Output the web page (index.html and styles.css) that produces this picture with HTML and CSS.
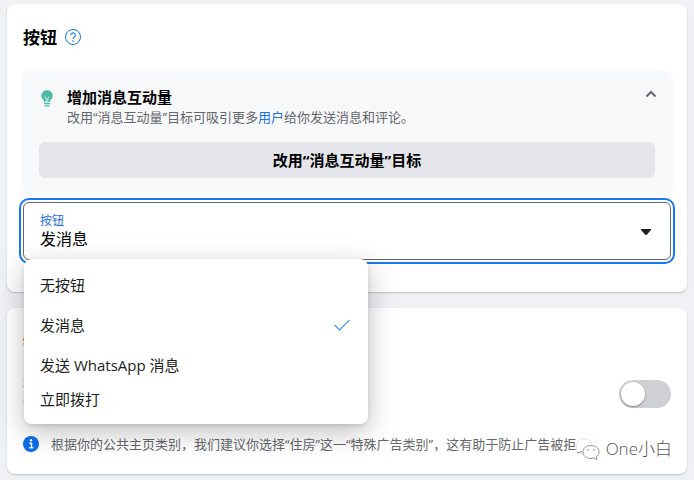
FILE: index.html
```html
<!DOCTYPE html>
<html lang="zh-CN">

<head>
    <meta charset="UTF-8">
    <meta name="viewport" content="width=device-width, initial-scale=1.0">
    <title>按钮</title>
    <link rel="stylesheet" href="styles.css">
</head>

<body>

    <section class="card">
        <h2 class="card-title">
            按钮
            <svg class="help-icon" viewBox="0 0 16 16" width="16" height="16">
                <circle cx="8" cy="8" r="7.5" fill="none" stroke="#1b74d8" />
                <path d="M5.7 6.2a2.3 2.3 0 1 1 3.5 2c-.8.5-1.2.8-1.2 1.7" fill="none" stroke="#1b74d8" stroke-width="1.1" />
                <circle cx="8" cy="12" r=".8" fill="#1b74d8" />
            </svg>
        </h2>

        <div class="tip">
            <div class="tip-head">
                <svg class="bulb" viewBox="0 0 12 17" width="12" height="17">
                    <path d="M6 0a5.7 5.7 0 0 0-5.7 5.7c0 2.3 1.5 3.3 2.3 4.6.4.7.5 1.2.6 1.9h5.6c.1-.7.2-1.2.6-1.9.8-1.3 2.3-2.3 2.3-4.6A5.7 5.7 0 0 0 6 0z" fill="#4dbba6" />
                    <path d="M4 6.5l1.2 2v3.7M8 6.5l-1.200 2v3.700" fill="none" stroke="#f7f8fa" stroke-width=".8" />
                    <path d="M3 13.7h6M3.5 15.9h5" stroke="#4dbba6" stroke-width="1.2" />
                </svg>
                <div class="tip-text">
                    <h3>增加消息互动量</h3>
                    <p>改用“消息互动量”目标可吸引更多<a href="#">用户</a>给你发送消息和评论。</p>
                </div>
                <button class="collapse" type="button" aria-label="收起">
                    <svg viewBox="0 0 12 8" width="12" height="8">
                        <path d="M1.500 6.500L6 2l4.500 4.500" fill="none" stroke="#65696f" stroke-width="2" />
                    </svg>
                </button>
            </div>
            <button class="switch-goal" type="button">改用“消息互动量”目标</button>
        </div>

        <div class="field">
            <label for="cta">按钮</label>
            <select id="cta">
                <option>无按钮</option>
                <option selected>发消息</option>
                <option>发送 WhatsApp 消息</option>
                <option>立即拨打</option>
            </select>
            <svg class="caret" viewBox="0 0 10 6" width="10" height="6">
                <path d="M0 0h10v1L5.500 6h-1L0 1z" fill="#1c1e21" />
            </svg>

            <div class="menu">
                <button type="button">无按钮</button>
                <button type="button">发消息
                    <svg viewBox="0 0 16 12" width="16" height="12">
                        <path d="M.5 6l5 5L15.500.8" fill="none" stroke="#3b8cec" stroke-width="1.1" />
                    </svg>
                </button>
                <button type="button">发送 WhatsApp 消息</button>
                <button type="button">立即拨打</button>
            </div>
        </div>
    </section>

    <section class="card special">
        <h2 class="card-title">特殊广告类别</h2>
        <div class="row">
            <label for="special">
                <span>在你的广告涉及时开启</span>
                <a href="#">详细了解</a>
            </label>
            <input type="checkbox" id="special" class="toggle">
        </div>
        <div class="note">
            <svg viewBox="0 0 16 16" width="16" height="16">
                <circle cx="8" cy="8" r="8" fill="#0a6fea" />
                <circle cx="8" cy="4.2" r="1.2" fill="#fff" />
                <path d="M6.300 7.200h2.200v4.600M6.300 11.800h4" fill="none" stroke="#fff" stroke-width="1.5" />
            </svg>
            <p>根据你的公共主页类别，我们建议你选择“住房”这一“特殊广告类别”，这有助于防止广告被拒</p>
        </div>
    </section>

    <div class="watermark">
        <svg viewBox="0 0 26 24" width="26" height="24">
            <path d="M8 16l-5 1 1-3C0 9 3 2 10 2c4 0 7 2 8 6" fill="#fff" stroke="#ccc" stroke-width=".8" stroke-dasharray="2 1" />
            <path d="M17 8.500c-5 0-8 3-8 6.500s3 6.500 8 6.500l3-.5 3 1.500-.5-3c1.500-1 2.500-2.500 2.500-4.500 0-3.500-3-6.500-8-6.500z" fill="#fff" stroke="#777" stroke-width=".8" />
            <path d="M3 16l5-1.500M13 13h2M19 13h2" stroke="#777" stroke-width=".8" />
        </svg>
        <span>One小白</span>
    </div>

</body>

</html>
```

FILE: styles.css
```css
* {
    box-sizing: border-box;
}

body {
    margin: 0;
    padding: 4px 7px 6px;
    position: relative;
    background: #eff1f5;
    color: #000;
    font-family: "Open Sans", "Noto Sans CJK SC", sans-serif;
    font-size: 15px;
    line-height: 20px;
}

h2, h3, p {
    margin: 0;
}

button, select {
    font: inherit;
    color: inherit;
}

a {
    color: #1b6fe0;
    text-decoration: none;
}

.card {
    padding: 24px 16px 32px;
    background: #fff;
    border-radius: 8px;
    box-shadow: 0 1px 2px rgba(0, 0, 0, 0.2);
}

.card-title {
    display: flex;
    align-items: center;
    gap: 8px;
    font-size: 17px;
    font-weight: bold;
}

.help-icon {
    margin-bottom: 2px;
}

.tip {
    margin-top: 23px;
    padding: 16px;
    background: #f7f8fa;
    border-radius: 8px;
    box-shadow: 0 1px 6px rgba(0, 0, 0, 0.06);
}

.tip-head {
    display: flex;
    align-items: flex-start;
}

.bulb {
    margin: 3px 14px 0 2px;
}

.tip-text {
    flex: 1;
}

.tip-text h3 {
    font-size: 15px;
}

.tip-text p {
    font-size: 13px;
    color: #65676b;
}

.collapse {
    display: flex;
    padding: 3px 0;
    margin-right: -2px;
    border: 0;
    background: none;
    cursor: pointer;
}

.switch-goal {
    width: 100%;
    height: 36px;
    margin-top: 15px;
    border: 0;
    border-radius: 6px;
    background: #e4e5ea;
    font-weight: bold;
    cursor: pointer;
}

.field {
    position: relative;
    margin-top: 8px;
}

.field label {
    position: absolute;
    top: 9px;
    left: 17px;
    font-size: 12px;
    color: #1b6fe0;
}

.field select {
    display: block;
    width: 100%;
    height: 58px;
    padding: 16px 16px 0;
    border: 1px solid #65676b;
    border-radius: 6px;
    outline: 2px solid #1877f2;
    outline-offset: 2px;
    background: #fff;
    font-size: 16px;
    appearance: none;
}

.caret {
    position: absolute;
    top: 27px;
    right: 20px;
}

.menu {
    position: absolute;
    top: 57px;
    left: 1px;
    z-index: 2;
    width: 344px;
    padding: 6px 0 11px;
    border-radius: 8px;
    background: #fff;
    box-shadow: 0 8px 28px rgba(0, 0, 0, 0.25), 0 2px 4px rgba(0, 0, 0, 0.1);
}

.menu button {
    display: flex;
    justify-content: space-between;
    align-items: center;
    width: 100%;
    height: 40px;
    padding: 0 18px 0 16px;
    border: 0;
    background: none;
    color: #1c1e21;
    cursor: pointer;
}

.menu button:last-child {
    height: 28px;
}

.special {
    margin-top: 16px;
    padding-bottom: 20px;
}

.row {
    display: flex;
    justify-content: space-between;
    align-items: center;
    margin-top: 22px;
}

.row label {
    display: flex;
    flex-direction: column;
}

.row label a {
    font-size: 12px;
}

.toggle {
    appearance: none;
    display: flex;
    align-items: center;
    width: 52px;
    height: 28px;
    margin: 0;
    padding: 2px;
    border-radius: 14px;
    background: #ced0d4;
}

.toggle::before {
    content: "";
    width: 24px;
    height: 24px;
    border-radius: 50%;
    background: #fff;
    box-shadow: 0 1px 2px rgba(0, 0, 0, 0.4);
}

.note {
    display: flex;
    align-items: center;
    gap: 12px;
    margin-top: 20px;
    font-size: 13px;
    color: #65676b;
}

.watermark {
    position: absolute;
    right: 22px;
    bottom: 19px;
    display: flex;
    align-items: center;
    gap: 6px;
    font-size: 17px;
    font-weight: 300;
    color: #555;
}
```
